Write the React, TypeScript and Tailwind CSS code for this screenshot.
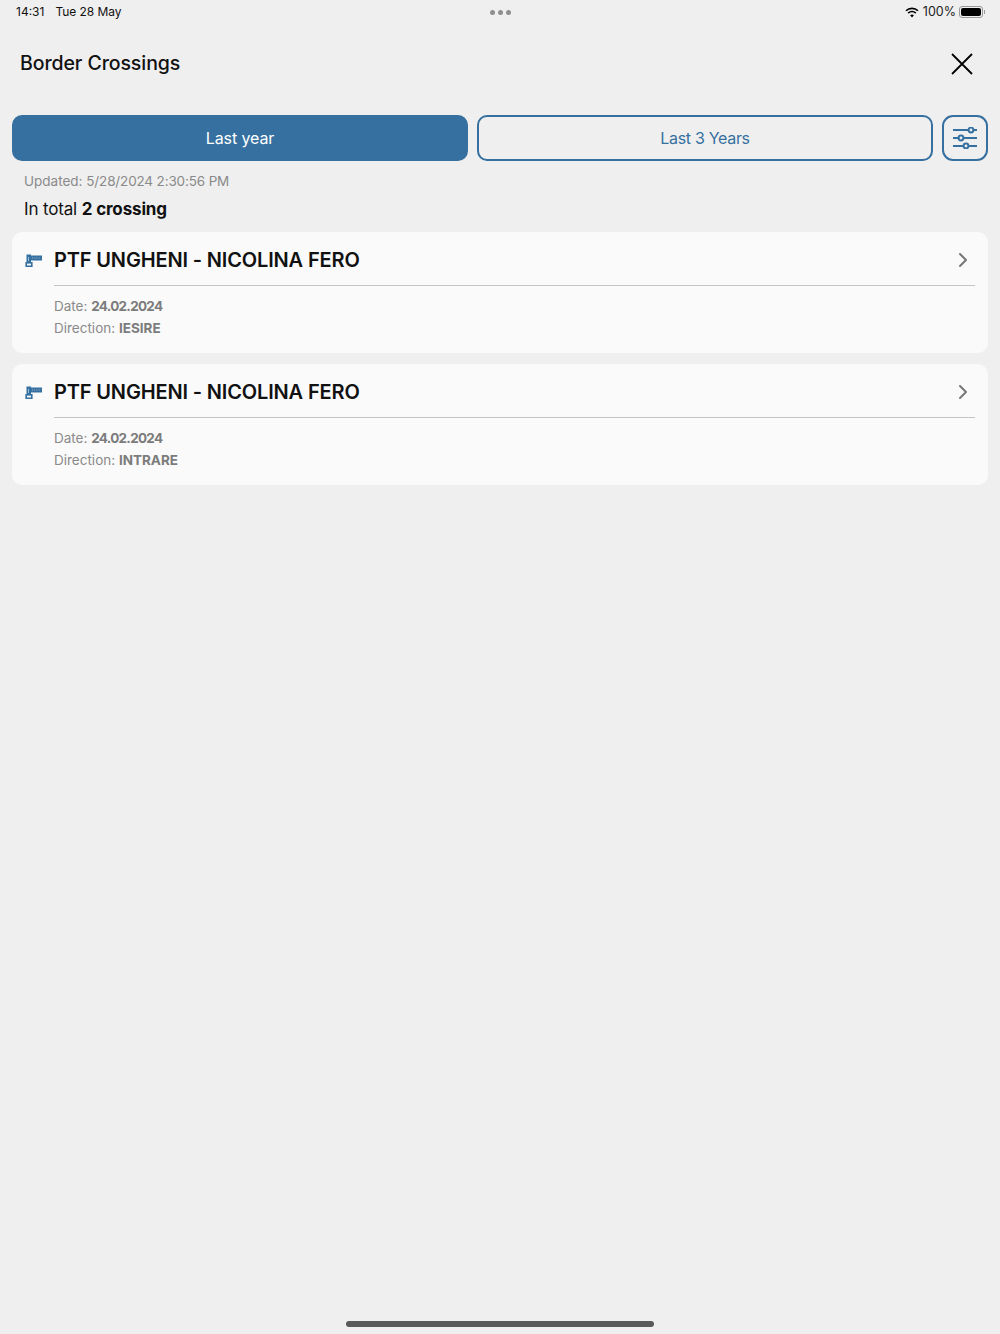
import { ChevronRight } from 'lucide-react';

const crossings = [
  { name: 'PTF UNGHENI - NICOLINA FERO', date: '24.02.2024', direction: 'IESIRE' },
  { name: 'PTF UNGHENI - NICOLINA FERO', date: '24.02.2024', direction: 'INTRARE' },
];

function BarrierIcon() {
  return (
    <svg width="17" height="13" viewBox="0 0 17 13" className="shrink-0">
      <rect x="1.5" y="0.5" width="4.5" height="9" fill="#3570a0" />
      <rect x="5" y="1.5" width="12" height="5" fill="#3570a0" />
      <path d="M7 4h9" stroke="#9dbdd6" strokeWidth="1" strokeDasharray="1 1.2" />
      <path d="M3.5 3v4" stroke="#9dbdd6" strokeWidth="1" />
      <rect x="1.2" y="8.800" width="5.600" height="3.500" fill="#f4f7fa" stroke="#3570a0" strokeWidth="1.6" />
    </svg>
  );
}

function WifiIcon() {
  return (
    <svg width="14" height="11" viewBox="0 0 14 11">
      <path d="M1 3.8a8.6 8.6 0 0 1 12 0" fill="none" stroke="#000" strokeWidth="1.6" />
      <path d="M3.2 6.1a5.4 5.4 0 0 1 7.6 0" fill="none" stroke="#000" strokeWidth="1.6" />
      <path d="M7 10.6 5.1 8.3a2.8 2.8 0 0 1 3.8 0z" fill="#000" />
    </svg>
  );
}

function CloseIcon() {
  return (
    <svg width="22" height="22" viewBox="0 0 22 22" fill="none" stroke="#000" strokeWidth="1.8">
      <path d="M1 1l20 20M21 1 1 21" />
    </svg>
  );
}

function FilterIcon() {
  return (
    <svg width="24" height="22" viewBox="0 0 24 22" fill="none" stroke="#3570a0" strokeWidth="2">
      <path d="M0 3h15.5M20.5 3H24M0 11h5.500M10.500 11H24M0 19h10.500M15.500 19H24" />
      <circle cx="18" cy="3" r="2.4" strokeWidth="2" />
      <circle cx="8" cy="11" r="2.4" strokeWidth="2" />
      <circle cx="13" cy="19" r="2.4" strokeWidth="2" />
    </svg>
  );
}

export default function App() {
  return (
    <div className="h-[1334px] flex flex-col bg-[#efefef] font-['Inter',sans-serif] overflow-hidden">
      <div className="h-6 shrink-0 pl-4 pr-[15px] grid grid-cols-3 items-center text-[12px] text-[#111]">
        <div className="flex gap-[11px]">
          <span>14:31</span>
          <span className="tracking-[-0.05px]">Tue 28 May</span>
        </div>
        <div className="flex justify-center gap-[2.7px]">
          <span className="w-[5px] h-[5px] rounded-full bg-[#8f8f8f]" />
          <span className="w-[5px] h-[5px] rounded-full bg-[#8f8f8f]" />
          <span className="w-[5px] h-[5px] rounded-full bg-[#8f8f8f]" />
        </div>
        <div className="flex items-center justify-end">
          <WifiIcon />
          <span className="ml-[4px] mr-[3px] text-[12.5px] text-[#222]">100%</span>
          <div className="flex items-center gap-[1px]">
            <div className="w-[24px] h-[12px] rounded-[3px] border border-[#999] p-[1px]">
              <div className="w-full h-full rounded-[2px] bg-black" />
            </div>
            <div className="w-[1px] h-[4px] bg-[#999]" />
          </div>
        </div>
      </div>

      <div className="h-[91px] shrink-0 pl-5 pr-[27px] pb-[12px] flex items-center justify-between">
        <h1 className="text-[19.5px] font-medium tracking-[-0.08px] text-[#111]">Border Crossings</h1>
        <CloseIcon />
      </div>

      <div className="px-3 flex gap-[9px]">
        <button className="flex-1 h-[46px] rounded-[10px] border-2 border-[#3570a0] bg-[#3570a0] text-white text-[16px] tracking-[-0.1px]">
          Last year
        </button>
        <button className="flex-1 h-[46px] rounded-[10px] border-2 border-[#3570a0] text-[#3570a0] text-[16px] tracking-[-0.3px]">
          Last 3 Years
        </button>
        <button className="w-[46px] h-[46px] shrink-0 rounded-[11px] border-2 border-[#3570a0] flex items-center justify-center">
          <FilterIcon />
        </button>
      </div>

      <p className="mt-[11px] ml-6 text-[13.5px] leading-[18px] text-[#8a8a8a]">
        Updated: <span className="tracking-[-0.15px]">5/28/2024 2:30:56 PM</span>
      </p>
      <p className="mt-[7px] ml-6 text-[17px] leading-[24px] tracking-[-0.15px] text-[#111]">
        In total <span className="font-bold">2 crossing</span>
      </p>

      <div className="mt-[11px] px-3 flex flex-col gap-[11px]">
        {crossings.map((c, i) => (
          <div key={i} className="h-[121px] rounded-[10px] bg-[#fafafa] px-[13px]">
            <div className="flex items-center h-[53px] pt-[3px]">
              <BarrierIcon />
              <span className="ml-3 flex-1 text-[20px] font-semibold tracking-[-0.15px] text-[#111]">{c.name}</span>
              <ChevronRight size={24} strokeWidth={2} className="text-[#777]" />
            </div>
            <div className="ml-[29px] h-[1px] bg-[#c4c4c4]" />
            <div className="ml-[29px] mt-[9px] text-[13.5px] leading-[22px] text-[#8a8a8a]">
              <p>
                Date: <span className="font-bold tracking-[-0.7px] text-[#7c7c7c]">{c.date}</span>
              </p>
              <p>
                Direction: <span className="font-bold text-[#7c7c7c]">{c.direction}</span>
              </p>
            </div>
          </div>
        ))}
      </div>

      <div className="mt-auto mb-[7px] mx-auto w-[308px] h-[6px] rounded-full bg-[#5a5a5a]" />
    </div>
  );
}
